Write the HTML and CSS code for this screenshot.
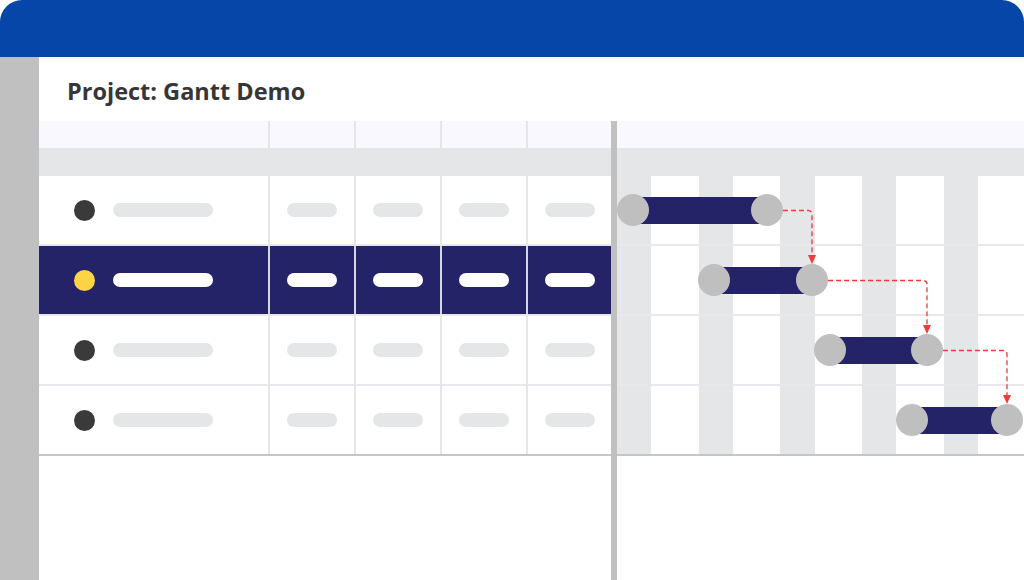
FILE: index.html
```html
<!DOCTYPE html>
<html>
<head>
    <title>Project: Gantt Demo</title>
    <link rel="stylesheet" href="styles.css">
</head>
<body>
    <div class="window">
        <header class="topbar"></header>
        <div class="main">
            <aside class="sidebar"></aside>
            <section class="content">
                <h1 class="title">Project: Gantt Demo</h1>
                <div class="gantt">
                    <div class="table">
                        <div class="head-row cols">
                            <div class="cell"></div>
                            <div class="cell"></div>
                            <div class="cell"></div>
                            <div class="cell"></div>
                            <div class="cell"></div>
                        </div>
                        <div class="head-band"></div>

                        <div class="row cols">
                            <div class="cell task"><span class="dot"></span><span class="pill long"></span></div>
                            <div class="cell"><span class="pill"></span></div>
                            <div class="cell"><span class="pill"></span></div>
                            <div class="cell"><span class="pill"></span></div>
                            <div class="cell"><span class="pill"></span></div>
                        </div>
                        <div class="row cols active">
                            <div class="cell task"><span class="dot"></span><span class="pill long"></span></div>
                            <div class="cell"><span class="pill"></span></div>
                            <div class="cell"><span class="pill"></span></div>
                            <div class="cell"><span class="pill"></span></div>
                            <div class="cell"><span class="pill"></span></div>
                        </div>
                        <div class="row cols">
                            <div class="cell task"><span class="dot"></span><span class="pill long"></span></div>
                            <div class="cell"><span class="pill"></span></div>
                            <div class="cell"><span class="pill"></span></div>
                            <div class="cell"><span class="pill"></span></div>
                            <div class="cell"><span class="pill"></span></div>
                        </div>
                        <div class="row cols last">
                            <div class="cell task"><span class="dot"></span><span class="pill long"></span></div>
                            <div class="cell"><span class="pill"></span></div>
                            <div class="cell"><span class="pill"></span></div>
                            <div class="cell"><span class="pill"></span></div>
                            <div class="cell"><span class="pill"></span></div>
                        </div>
                    </div>

                    <div class="splitter"></div>

                    <div class="chart">
                        <div class="head-row"></div>
                        <div class="head-band"></div>
                        <div class="chart-body">
                            <div class="chart-row">
                                <div class="bar" style="left: 0px; width: 166px;"><span class="knob"></span><span class="knob"></span></div>
                            </div>
                            <div class="chart-row">
                                <div class="bar" style="left: 81px; width: 130px;"><span class="knob"></span><span class="knob"></span></div>
                            </div>
                            <div class="chart-row">
                                <div class="bar" style="left: 197px; width: 129px;"><span class="knob"></span><span class="knob"></span></div>
                            </div>
                            <div class="chart-row last">
                                <div class="bar" style="left: 279px; width: 127px;"><span class="knob"></span><span class="knob"></span></div>
                            </div>

                            <!-- dependency links -->
                            <svg class="links" width="407" height="280" viewBox="0 0 407 280">
                                <g fill="none" stroke="#f23a3a" stroke-width="1.3" stroke-dasharray="5 3">
                                    <path d="M166 34.5 H191 Q195 34.5 195 38.5 V80"/>
                                    <path d="M211 104.5 H306 Q310 104.5 310 108.5 V150"/>
                                    <path d="M326 174.5 H386 Q390 174.5 390 178.5 V220"/>
                                </g>
                                <g fill="#f23a3a">
                                    <path d="M191 79 L199 79 L195 88 Z"/>
                                    <path d="M306 149 L314 149 L310 158 Z"/>
                                    <path d="M386 219 L394 219 L390 228 Z"/>
                                </g>
                            </svg>
                        </div>
                    </div>
                </div>
            </section>
        </div>
    </div>
</body>
</html>
```

FILE: styles.css
```css
body {
    margin: 0;
    padding: 0;
    background: #fff;
    font-family: "Open Sans", "DejaVu Sans", sans-serif;
    overflow: hidden;
}

.window {
    width: 1024px;
    height: 580px;
    display: flex;
    flex-direction: column;
}

.topbar {
    height: 57px;
    flex-shrink: 0;
    background: #0546a8;
    border-radius: 22px 22px 0 0;
}

.main {
    flex: 1;
    display: flex;
    min-height: 0;
}

.sidebar {
    width: 39px;
    flex-shrink: 0;
    background: #c0c0c0;
}

.content {
    flex: 1;
    display: flex;
    flex-direction: column;
    min-width: 0;
}

.title {
    margin: 0;
    height: 64px;
    box-sizing: border-box;
    padding: 19px 0 0 28px;
    font-size: 23.5px;
    line-height: 30px;
    font-weight: 700;
    color: #363636;
}

.gantt {
    flex: 1;
    display: flex;
}

/* left grid */
.table {
    width: 572px;
    flex-shrink: 0;
}

.cols {
    display: grid;
    grid-template-columns: 231px 86px 86px 86px 83px;
}

.cols .cell {
    box-sizing: border-box;
    border-right: 2px solid #e6e6ea;
}

.cols .cell:last-child {
    border-right: none;
}

.head-row {
    height: 27px;
    background: #f9f8fe;
}

.head-band {
    height: 28px;
    background: #e5e6e8;
}

.row {
    height: 70px;
    box-sizing: border-box;
    border-bottom: 2px solid #e8e8ec;
}

.row.last {
    border-bottom-color: #c6c6c6;
}

.row .cell {
    display: flex;
    align-items: center;
    justify-content: center;
}

.row .cell.task {
    justify-content: flex-start;
    padding-left: 35px;
    gap: 18px;
}

.dot {
    width: 21px;
    height: 21px;
    border-radius: 50%;
    background: #3a3a3a;
}

.pill {
    width: 50px;
    height: 14px;
    border-radius: 7px;
    background: #e5e6e8;
}

.pill.long {
    width: 100px;
}

.row.active {
    background: #252368;
}

.row.active .cell {
    border-right-color: #d6d6e2;
}

.row.active .dot {
    background: #fdd444;
}

.row.active .pill {
    background: #fff;
}

.splitter {
    width: 6px;
    flex-shrink: 0;
    background: #c0c0c0;
}

/* right chart */
.chart {
    flex: 1;
    min-width: 0;
}

.chart-body {
    position: relative;
}

.chart-row {
    position: relative;
    height: 70px;
    box-sizing: border-box;
    border-bottom: 2px solid #e8e8ec;
    background: repeating-linear-gradient(to right, #e5e6e8 0 34px, #fff 34px 81.75px);
}

.chart-row.last {
    border-bottom-color: #c6c6c6;
}

.bar {
    position: absolute;
    top: 18px;
    height: 32px;
    display: flex;
    justify-content: space-between;
}

.bar::before {
    content: "";
    position: absolute;
    left: 16px;
    right: 16px;
    top: 3px;
    bottom: 2px;
    background: #252368;
}

.knob {
    position: relative;
    width: 32px;
    height: 32px;
    border-radius: 50%;
    background: #bfbfbf;
}

.links {
    position: absolute;
    left: 0;
    top: 0;
    pointer-events: none;
}
```
